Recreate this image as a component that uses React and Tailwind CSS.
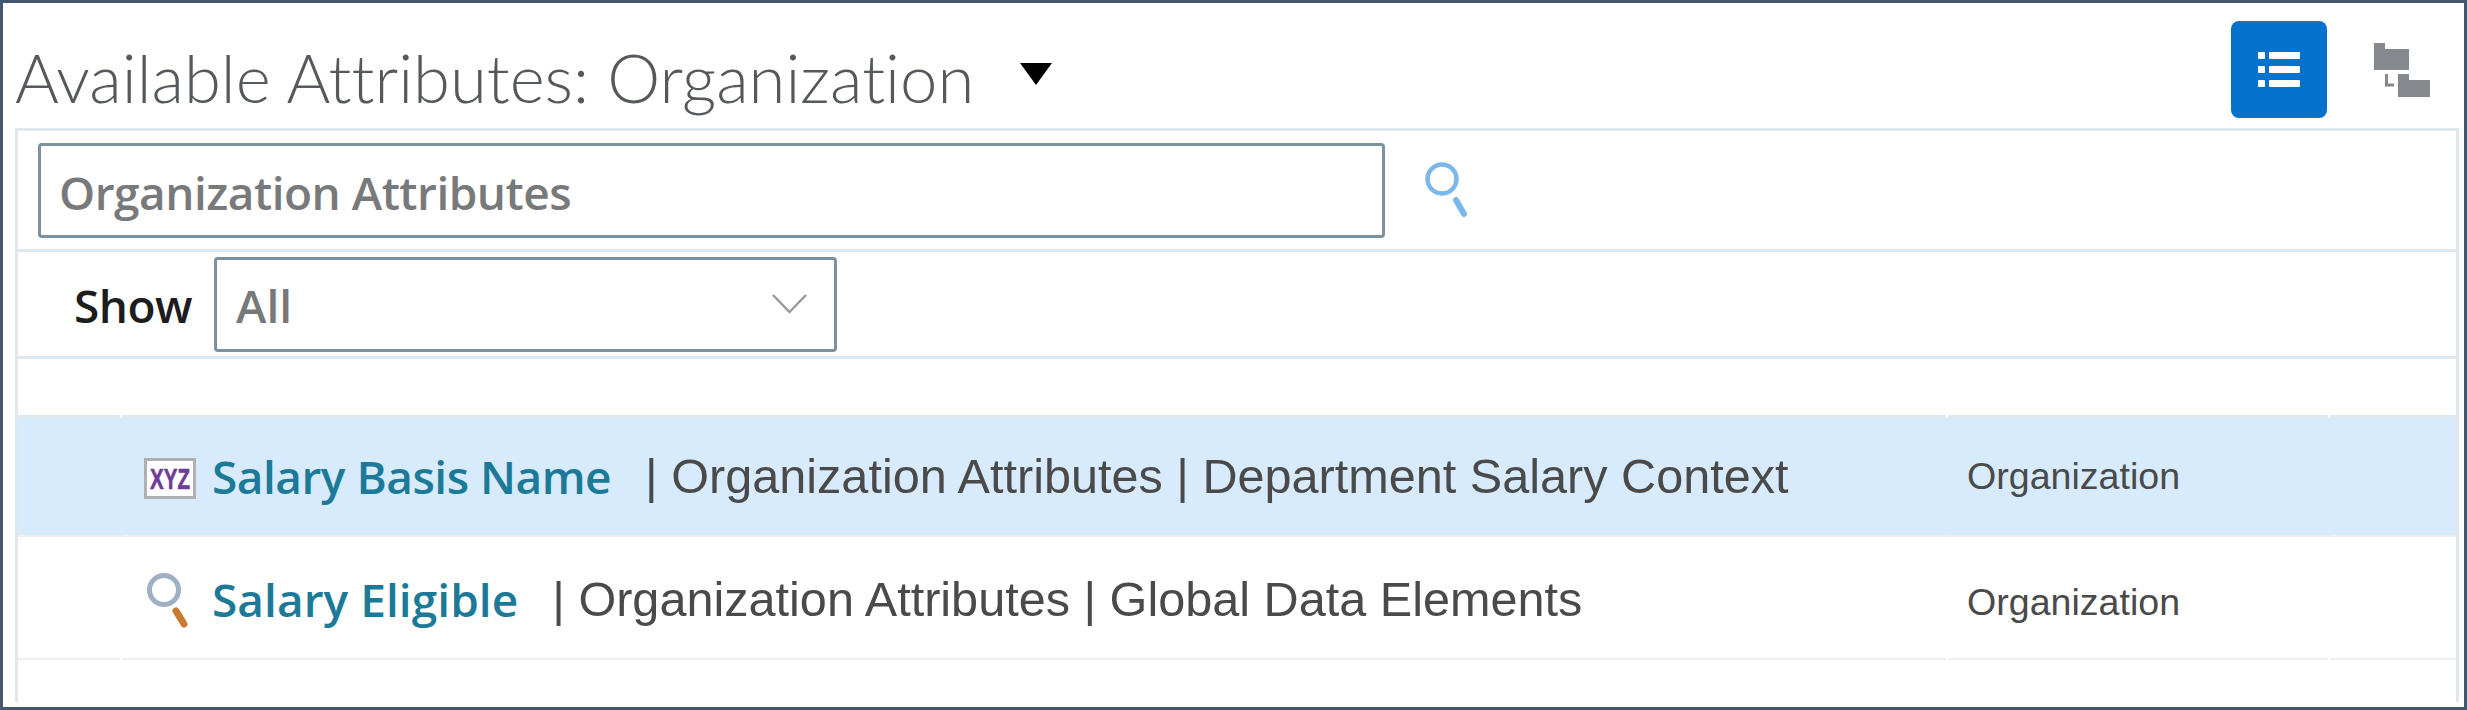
const title = "font-['Lato','Open_Sans',sans-serif] [font-variant-ligatures:none]";
const ui = "font-['Open_Sans','Lato',sans-serif]";
const plain = "font-['Liberation_Sans',Arial,sans-serif]";

function SearchIcon() {
  return (
    <svg width="42" height="56" viewBox="0 0 42 56" className="block">
      <circle cx="17" cy="17" r="14.5" fill="none" stroke="#7ab8ec" strokeWidth="4.5" />
      <path d="M31 38 L39 52" fill="none" stroke="#7ab8ec" strokeWidth="6" strokeLinecap="round" />
    </svg>
  );
}

function ListIcon() {
  return (
    <svg width="42" height="36" viewBox="0 0 42 36" fill="white" className="block">
      <rect x="0" y="0" width="7" height="7" rx="1" />
      <rect x="11" y="0" width="31" height="7" rx="1" />
      <rect x="0" y="14" width="7" height="7" rx="1" />
      <rect x="11" y="14" width="31" height="7" rx="1" />
      <rect x="0" y="28" width="7" height="7" rx="1" />
      <rect x="11" y="28" width="31" height="7" rx="1" />
    </svg>
  );
}

function TreeIcon() {
  return (
    <svg width="56" height="56" viewBox="0 0 56 56" className="block">
      <path d="M0 0 H11 V6 H35 V27 H0 Z" fill="#85888c" />
      <path d="M24 31 H35 V37 H56 V54 H24 Z" fill="#85888c" />
      <path d="M12.5 31 V42 H20" fill="none" stroke="#85888c" strokeWidth="3" />
    </svg>
  );
}

function XyzIcon() {
  return (
    <svg width="52" height="41" viewBox="0 0 52 41" className="block shrink-0 mt-[3px]">
      <rect x="1.5" y="1.5" width="49" height="38" fill="white" stroke="#b0b0b0" strokeWidth="3" />
      <text
        transform="translate(6 31) scale(0.71 1)"
        fontFamily="Liberation Sans, sans-serif"
        fontWeight="700"
        fontSize="29"
        fill="#6f3b98"
        stroke="#6f3b98"
        strokeWidth="0.6"
      >
        XYZ
      </text>
    </svg>
  );
}

function GlassIcon() {
  return (
    <svg width="52" height="62" viewBox="0 0 52 62" className="block shrink-0 mt-[9px]">
      <circle cx="20" cy="19" r="14.5" fill="none" stroke="#9fb0c4" strokeWidth="5" />
      <path d="M32 40 L40 53" fill="none" stroke="#c87a30" strokeWidth="7" strokeLinecap="round" />
    </svg>
  );
}

function Row({ icon, name, path, selected, height, textPad, typePad, nameTracking }) {
  const bg = selected ? 'bg-[#d7ebfc]' : 'bg-white';
  return (
    <div className={`flex ${height} ${bg}`}>
      <div className="w-[102px] shrink-0 border-b-2 border-[#eeeeee]" />
      <div className="ml-[2px] w-[1824px] shrink-0 flex items-center border-b-2 border-[#eeeeee] pl-[22px]">
        <div className="w-[68px] shrink-0">{icon}</div>
        <span className={`${ui} ${textPad} ${nameTracking} text-[46px] font-semibold text-[#1c7a98] whitespace-nowrap`}>{name}</span>
        <span className={`ml-[34px] ${textPad} ${plain} text-[48.6px] text-[#4a4a4a] whitespace-nowrap`}>{path}</span>
      </div>
      <div className={`ml-[2px] w-[380px] shrink-0 flex items-center border-b-2 border-[#eeeeee] pl-[19px] ${typePad}`}>
        <span className={`${plain} text-[37.6px] text-[#4a4a4a]`}>Organization</span>
      </div>
      <div className="ml-[2px] flex-1 border-b-2 border-[#eeeeee]" />
    </div>
  );
}

export default function App() {
  return (
    <div className="w-[2467px] h-[710px] overflow-hidden bg-white border-[3px] border-[#44566e] flex flex-col">
      <div className="h-[125px] shrink-0 flex justify-between pl-[12px] pr-[34px]">
        <div className="flex items-start pt-[35px]">
          <h1 className={`${title} text-[67px] leading-[78px] font-light text-[#55585c] whitespace-nowrap`}>
            Available Attributes: Organization
          </h1>
          <svg width="32" height="22" viewBox="0 0 32 22" className="block ml-[46px] mt-[25px]">
            <path d="M0 0 H32 L16 22 Z" fill="#000" />
          </svg>
        </div>
        <div className="flex items-start pt-[18px]">
          <div className="w-[96px] h-[97px] rounded-[8px] bg-[#0572ce] flex items-center justify-center">
            <ListIcon />
          </div>
          <div className="ml-[47px] mt-[22px]">
            <TreeIcon />
          </div>
        </div>
      </div>

      <div className="ml-[12px] mr-[5px] h-[574px] border-x-[3px] border-t-[3px] border-[#dfe7ef] flex flex-col">
        <div className="h-[121px] shrink-0 flex items-center pl-[20px] border-b-[3px] border-[#dfe7ef]">
          <div className="w-[1347px] h-[95px] rounded-[4px] border-[3px] border-[#7d929f] flex items-center pl-[18px] pt-[5px]">
            <span className={`${ui} text-[46px] font-semibold tracking-[-0.5px] text-[#78797b]`}>Organization Attributes</span>
          </div>
          <div className="ml-[40px]">
            <SearchIcon />
          </div>
        </div>

        <div className="h-[107px] shrink-0 flex items-center pl-[56px] border-b-[3px] border-[#dfe7ef]">
          <span className={`${ui} text-[46px] pt-[3px] font-semibold tracking-[-0.5px] text-[#1d1d1d] w-[140px] shrink-0`}>Show</span>
          <div className="w-[623px] h-[95px] rounded-[4px] border-[3px] border-[#7d929f] flex items-center justify-between pl-[19px] pr-[27px]">
            <span className={`${ui} text-[46px] pt-[3px] font-semibold text-[#77787a]`}>All</span>
            <svg width="35" height="20" viewBox="0 0 35 20" className="block">
              <path d="M1 1 L17.5 18 L34 1" fill="none" stroke="#9a9a9a" strokeWidth="2.5" />
            </svg>
          </div>
        </div>

        <div className="h-[59px] shrink-0 flex">
          <div className="w-[102px] shrink-0 border-b-[3px] border-[#dfe7ef]" />
          <div className="ml-[2px] w-[1824px] shrink-0 border-b-[3px] border-[#dfe7ef]" />
          <div className="ml-[2px] w-[380px] shrink-0 border-b-[3px] border-[#dfe7ef]" />
          <div className="ml-[2px] flex-1 border-b-[3px] border-[#dfe7ef]" />
        </div>

        <Row icon={<XyzIcon />} name="Salary Basis Name" path="| Organization Attributes | Department Salary Context" selected height="h-[119px]" nameTracking="tracking-[-0.5px]" />
        <Row icon={<GlassIcon />} name="Salary Eligible" path="| Organization Attributes | Global Data Elements" height="h-[123px]" textPad="pt-[3px]" typePad="pt-[9px]" nameTracking="tracking-[0.05px]" />
      </div>
    </div>
  );
}
